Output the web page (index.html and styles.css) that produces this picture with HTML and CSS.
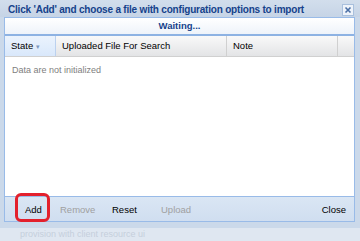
FILE: index.html
```html
<!DOCTYPE html>
<html>
<head>
    <meta charset="utf-8">
    <title>Import configuration</title>
    <link rel="stylesheet" href="styles.css">
</head>
<body>

    <div class="window">
        <div class="titlebar">
            <span class="title">Click 'Add' and choose a file with configuration options to import</span>
            <span class="close-tool">
                <svg width="10" height="10" viewBox="0 0 10 10">
                    <path d="M2.5 2.5 L7.5 7.5 M7.5 2.5 L2.5 7.5" stroke="#4a6fa5" stroke-width="1.6"/>
                </svg>
            </span>
        </div>

        <div class="panel">
            <div class="status">Waiting...</div>

            <div class="grid-header">
                <div class="col col-state">State <span class="sort">&#9662;</span></div>
                <div class="col col-file">Uploaded File For Search</div>
                <div class="col col-note">Note</div>
                <div class="col col-rest"></div>
            </div>

            <div class="grid-body">
                <p class="empty">Data are not initialized</p>
            </div>

            <div class="toolbar">
                <span class="btn btn-add">Add</span>
                <span class="btn btn-remove disabled">Remove</span>
                <span class="btn btn-reset">Reset</span>
                <span class="btn disabled">Upload</span>
                <span class="spacer"></span>
                <span class="btn">Close</span>
            </div>
        </div>

        <div class="window-foot"></div>
    </div>

    <div class="behind">provision with client resource ui</div>

</body>
</html>
```

FILE: styles.css
```css
body {
    margin: 0;
    width: 360px;
    height: 241px;
    overflow: hidden;
    background: #dfe7f1;
    font-family: "Liberation Sans", Arial, sans-serif;
    font-size: 9px;
}

.window {
    width: 360px;
    background: #cbd9ea;
    display: flex;
    flex-direction: column;
}

/* title */
.titlebar {
    height: 17px;
    display: flex;
    align-items: center;
    padding: 0 6px 0 8px;
    background: linear-gradient(#d2deec, #c6d4e6);
}

.title {
    flex: 1;
    padding-top: 1px;
    color: #15428b;
    font-weight: bold;
    font-size: 10px;
    letter-spacing: -0.2px;
    white-space: nowrap;
}

.close-tool {
    width: 10px;
    height: 10px;
    margin-top: 2px;
    background: #eef3fa;
    border: 1px solid #a9c0dd;
    display: flex;
}

/* panel */
.panel {
    margin: 0 5px 0 4px;
    border: 1px solid #99bbe8;
    display: flex;
    flex-direction: column;
}

.status {
    height: 16px;
    line-height: 16px;
    text-align: center;
    background: linear-gradient(#ffffff, #eef3fa);
    border-bottom: 2px solid #8db2e3;
    color: #15428b;
    font-weight: bold;
    font-size: 9.5px;
}

.grid-header {
    height: 20px;
    display: flex;
    background: linear-gradient(#f9f9f9, #e3e4e6);
    border-bottom: 1px solid #d0d0d0;
    font-size: 9.5px;
}

.col {
    line-height: 20px;
    padding-left: 6px;
    border-right: 1px solid #d0d0d0;
    color: #000;
    white-space: nowrap;
}

.col-state {
    width: 44px;
    background: linear-gradient(#ebf3fd, #d9e8fb);
    border-right-color: #bbd1ef;
}

.sort {
    color: #7d97bd;
    font-size: 7px;
}

.col-file {
    width: 164px;
}

.col-note {
    width: 104px;
}

.col-rest {
    flex: 1;
    border-right: none;
}

.grid-body {
    height: 139px;
    background: #fff;
}

.empty {
    margin: 8px 0 0 7px;
    color: #808080;
}

/* buttons */
.toolbar {
    height: 24px;
    display: flex;
    align-items: center;
    padding: 0 8px 0 20px;
    background: linear-gradient(#dae6f4, #d0def0);
    border-top: 1px solid #99bbe8;
    font-size: 9.5px;
}

.btn {
    color: #000;
}

.btn.disabled {
    color: #a0a0a0;
}

.btn-add {
    width: 35px;
    position: relative;
}

.btn-remove {
    width: 52px;
}

.btn-reset {
    width: 49px;
}

/* red highlight drawn over the Add button */
.btn-add::after {
    content: "";
    position: absolute;
    left: -10px;
    width: 29px;
    top: -11px;
    height: 23px;
    border: 3px solid #e3202c;
    border-radius: 6px;
}

.spacer {
    flex: 1;
}

.window-foot {
    height: 6px;
}

.behind {
    padding: 1px 0 0 20px;
    color: #c5cfdc;
}
```
